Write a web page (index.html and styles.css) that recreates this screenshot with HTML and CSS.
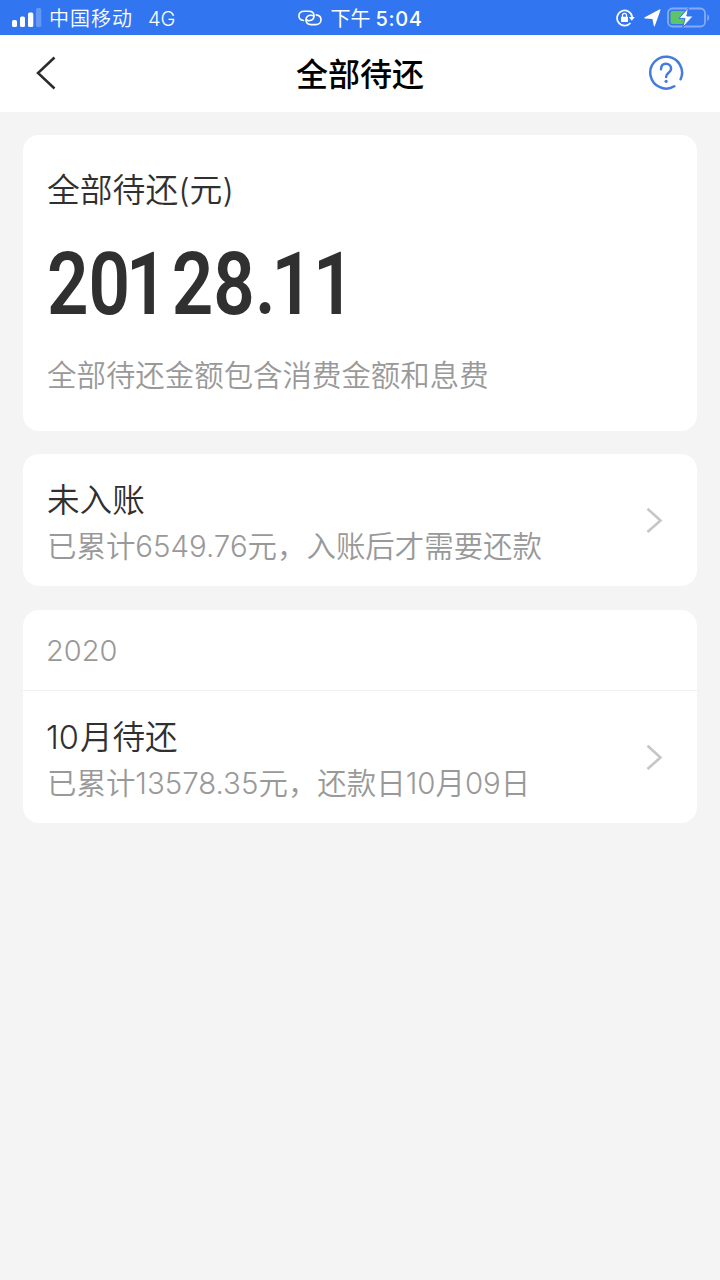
FILE: index.html
```html
<!DOCTYPE html>
<html lang="zh-CN">
<head>
<meta charset="UTF-8">
<title>全部待还</title>
<link rel="stylesheet" href="styles.css">
</head>
<body>
<div class="status">
  <div class="status-left">
    <svg class="signal" width="31" height="20" viewBox="0 0 31 20" fill="#fff"><rect x="0" y="12" width="5" height="7" rx="1.6"/><rect x="8" y="8.5" width="5" height="10.5" rx="1.6"/><rect x="16" y="4.5" width="5.3" height="14.5" rx="1.6"/><rect x="24" y="0" width="5.3" height="19" rx="1.6" opacity=".25"/></svg>
    <span class="carrier">中国移动</span><span class="network">4G</span>
  </div>
  <div class="status-center">
    <svg width="24" height="16" viewBox="0 0 24 16" fill="none" stroke="#fff" stroke-width="1.6" stroke-linecap="round"><path d="M5.500 10.500C2.500 10 .9 8.300.9 6 .9 3.200 3 1.300 6.200 1.300h4.600c3.200 0 5.200 1.900 5.200 4.500 0 2.900-2 4.900-5 4.900-1.300 0-2.200-.4-2.900-1"/><path d="M18.300 4.900c3 .5 4.700 2.300 4.700 4.800 0 2.800-2.100 4.900-5.200 4.900h-4.600C10 14.600 8 12.700 8 10.100c0-2.900 2-4.900 5-4.900 1.300 0 2.200.4 2.900 1"/></svg>
    <span class="time">下午<b>5:04</b></span>
  </div>
  <div class="status-right">
    <svg width="20" height="18" viewBox="0 0 20 18"><path d="M14.500 14A7.600 7.600 0 1 1 16.200 8" fill="none" stroke="#fff" stroke-width="1.700"/><path d="M12.800 8h6l-3 3.800z" fill="#fff"/><rect x="5" y="7.800" width="7" height="5.200" rx=".7" fill="#fff"/><path d="M6.500 8V6.300a2 2 0 0 1 4 0V8" fill="none" stroke="#fff" stroke-width="1.300"/></svg>
    <svg class="arrow" width="17" height="18" viewBox="0 0 16 17" fill="#fff"><path d="M.7 7.900 14.500.5c.8-.4 1.200 0 .9.900L10.300 15.900c-.3.700-.9.700-1.100 0L7.900 9.500.9 8.900C.1 8.800 0 8.300.7 7.900z"/></svg>
    <svg class="battery" width="43" height="21" viewBox="0 0 43 21"><rect x="1" y="1.500" width="37" height="18" rx="4.500" fill="none" stroke="#85abf7" stroke-width="1.800"/><path d="M40.300 7.500v6.500c2.400-.8 2.400-5.700 0-6.500z" fill="#85abf7"/><rect x="3.500" y="4" width="15" height="13" rx="2" fill="#5fc466"/><path d="M21.500.6 12 11.400h6L15.800 20.300 26.300 9h-6.500z" fill="#fff" stroke="#3275f0" stroke-width="1"/></svg>
  </div>
</div>
<header class="nav">
  <svg class="back" width="22" height="34" viewBox="0 0 22 34" fill="none" stroke="#2b2b2b" stroke-width="2.500"><path d="M19.500 1.500 3 17l16.500 15.500"/></svg>
  <h1 class="nav-title">全部待还</h1>
  <svg class="help" width="36" height="36" viewBox="0 0 36 36" fill="none" stroke="#447be2" stroke-width="2.500" stroke-linecap="round"><path d="M26.300 31.300A15.900 15.900 0 1 1 32.600 24.300"/><path d="M13 14.300c0-3.500 2.100-5.500 5-5.500s5.100 2 5.100 4.900c0 4.300-5 4-5 8.300"/><circle cx="18.100" cy="26.300" r="1.600" fill="#447be2" stroke="none"/></svg>
</header>
<main class="content">
  <section class="card summary">
    <div class="label">全部待还(元)</div>
    <div class="amount">2<span class="tight">0</span><span class="loose">1</span>28<span class="tight">.</span>11</div>
    <div class="note">全部待还金额包含消费金额和息费</div>
  </section>
  <section class="card row">
    <div class="row-text">
      <div class="row-title">未入账</div>
      <div class="row-sub">已累计<span class="num">6549.76</span>元，入账后才需要还款</div>
    </div>
    <svg width="18" height="28" viewBox="0 0 18 28" fill="none" stroke="#c5c5ca" stroke-width="2.600"><path d="M1.500 2.800 14.500 14.500 1.500 26"/></svg>
  </section>
  <section class="card bill">
    <div class="year">2020</div>
    <div class="row">
      <div class="row-text">
        <div class="row-title"><span class="title-num">10</span>月待还</div>
        <div class="row-sub">已累计<span class="num">13578.35</span>元，还款日<span class="num">10</span>月<span class="num">09</span>日</div>
      </div>
      <svg width="18" height="28" viewBox="0 0 18 28" fill="none" stroke="#c5c5ca" stroke-width="2.600"><path d="M1.500 2.800 14.500 14.500 1.500 26"/></svg>
    </div>
  </section>
</main>
</body>
</html>
```
FILE: styles.css
```css
* { box-sizing: border-box; }
body {
  margin: 0;
  min-height: 1280px;
  background: #f4f4f4;
  color: #303030;
  font-family: Inter, "Noto Sans CJK SC", sans-serif;
  font-weight: 350;
}
svg { display: block; flex: none; }
.status {
  display: grid;
  grid-template-columns: 1fr auto 1fr;
  align-items: center;
  height: 35px;
  padding: 0 10px 0 12px;
  background: #3275f0;
  color: #fff;
  font-size: 20px;
  line-height: 32px;
  white-space: nowrap;
}
.status-left, .status-center, .status-right { display: flex; align-items: center; height: 35px; }
.status-center { margin-left: -2px; }
.carrier { margin-left: 6px; padding-top: 3px; letter-spacing: 1px; }
.network { margin-left: 15px; padding-top: 2px; font-size: 20px; }
.time { margin-left: 9px; padding-top: 3px; font-weight: 400; }
.time b { margin-left: 5px; font-weight: 500; letter-spacing: .6px; }
.status-right { justify-content: flex-end; }
.arrow { margin-left: 8px; }
.battery { margin-left: 6px; }
.nav {
  display: flex;
  align-items: center;
  justify-content: space-between;
  height: 77px;
  padding: 0 36px 0 35px;
  background: #fff;
}
.back { margin-bottom: 1px; }
.nav-title {
  margin: 2px 0 0 15px;
  color: #000;
  font-size: 32px;
  line-height: 48px;
  font-weight: 500;
}
.help { margin-bottom: 1px; }
.content {
  display: flex;
  flex-direction: column;
  gap: 23px;
  padding: 23px;
}
.card { background: #fff; border-radius: 16px; }
.bill { margin-top: 1px; }
.summary { height: 296px; padding: 31px 24px 0; }
.label { font-size: 32.800px; line-height: 48px; }
.amount {
  width: max-content;
  margin-top: 20px;
  font-family: Roboto, sans-serif;
  font-size: 88px;
  line-height: 100px;
  font-weight: 600;
  transform: scaleX(.827);
  transform-origin: left;
}
.tight { letter-spacing: -5px; }
.loose { letter-spacing: 5px; }
.note { margin-top: 19px; color: #999; font-size: 29.450px; line-height: 44px; }
.row {
  display: flex;
  align-items: center;
  justify-content: space-between;
  height: 132px;
  padding: 0 33px 0 24px;
}
.row-text { padding-top: 6px; }
.row-title { font-size: 32.600px; line-height: 46px; }
.row-sub { color: #999; font-size: 29.450px; line-height: 46px; }
.title-num { margin-right: 1px; margin-left: -1px; }
.year {
  height: 81px;
  padding-left: 23px;
  border-bottom: 1px solid #f0f0f0;
  color: #999;
  font-size: 29px;
  line-height: 81px;
}
```
